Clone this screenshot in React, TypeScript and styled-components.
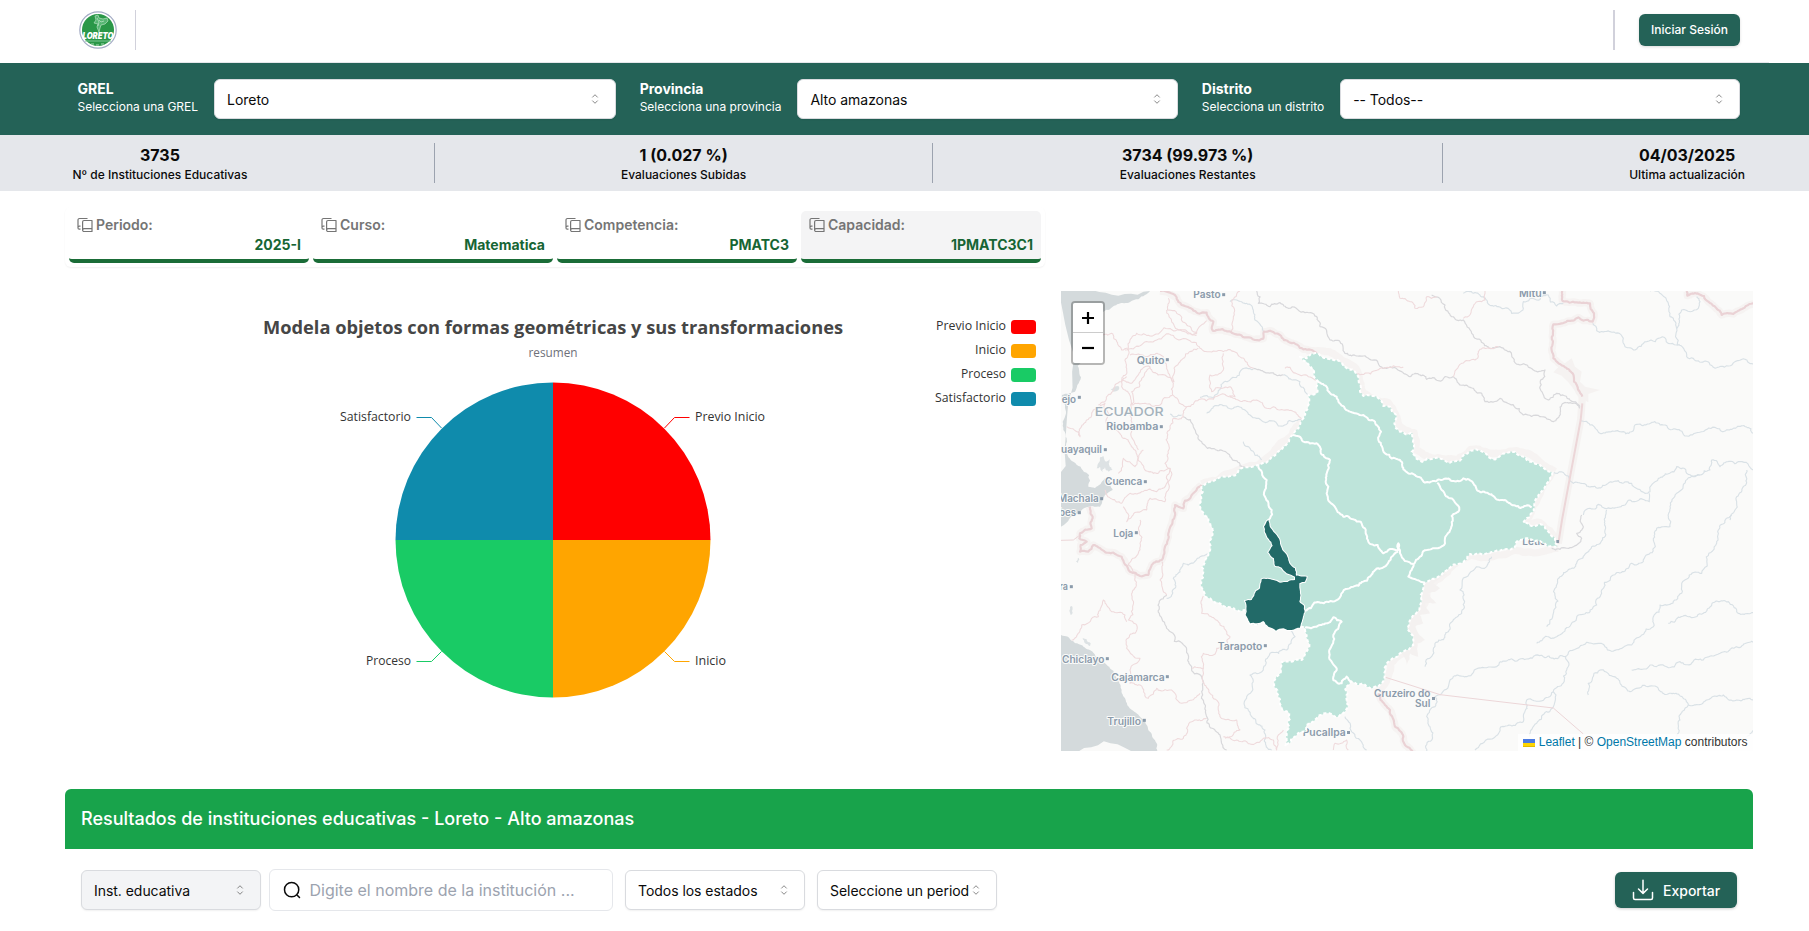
import React from 'react';
import styled, { createGlobalStyle } from 'styled-components';

const Global = createGlobalStyle`
  *, *::before, *::after { box-sizing: border-box; }
  html, body { margin: 0; padding: 0; background: #fff; overflow: hidden; }
  body { font-family: Inter, 'Liberation Sans', sans-serif; color: #0a0a0a; }
  button { font-family: inherit; border: 0; }
`;

const brand = '#246257';

const Page = styled.div`
  width: 1809px;
  height: 931px;
  overflow: hidden;
  background: #fff;
`;

const Header = styled.header`
  height: 63px;
  margin: 0 40px;
  padding: 10px 29px 0 39px;
  display: flex;
  justify-content: space-between;
  align-items: flex-start;
  border-bottom: 1px solid #e5e7eb;
`;

const HeaderSide = styled.div`
  display: flex;
  align-items: center;
  gap: ${(p: { $gap: number }) => p.$gap}px;
  height: 40px;
`;

const HeaderRule = styled.span<{ $w?: number }>`
  width: ${(p) => p.$w ?? 1}px;
  height: 40px;
  background: #d1d1db;
`;

const LoginButton = styled.button`
  width: 101px;
  height: 32px;
  border-radius: 6px;
  background: ${brand};
  color: #fff;
  font-size: 12px;
  font-weight: 500;
  padding: 0 0 1px;
  box-shadow: 0 1px 3px rgba(0, 0, 0, 0.15);
`;

const LocationBar = styled.section`
  height: 72px;
  padding: 16px 69px 0 77.5px;
  background: ${brand};
  display: grid;
  grid-template-columns: repeat(3, 1fr);
  column-gap: 24px;
  align-items: start;
`;

const Field = styled.div`
  display: flex;
  gap: 16px;
`;

const FieldLabel = styled.div`
  color: #fff;
  white-space: nowrap;
  font-size: 12px;
  line-height: 16px;
  font-weight: 400;
  strong {
    display: block;
    font-size: 14px;
    line-height: 20px;
    font-weight: 700;
  }
`;

const SelectBox = styled.div<{ $width?: number; $muted?: boolean }>`
  ${(p) => (p.$width ? `width: ${p.$width}px; flex: none;` : 'flex: 1;')}
  height: 40px;
  padding: 0 12px;
  display: flex;
  align-items: center;
  justify-content: space-between;
  border: 1px solid #d9dbdf;
  border-radius: 6px;
  background: ${(p) => (p.$muted ? '#f3f4f6' : '#fff')};
  box-shadow: 0 1px 2px rgba(0, 0, 0, 0.06);
  font-size: 14px;
  white-space: nowrap;
  span { min-width: 0; letter-spacing: -0.04px; }
  svg { flex: none; opacity: 0.5; }
`;

const StatsBar = styled.section`
  height: 56px;
  padding: 8px 64px 8px 72.5px;
  background: #e5e7eb;
  display: flex;
  justify-content: space-between;
`;

const StatRule = styled.span`
  width: 1px;
  height: 40px;
  background: #9ca3af;
`;

const Stat = styled.div`
  text-align: center;
  font-size: 12px;
  line-height: 16px;
  font-weight: 500;
  strong {
    display: block;
    font-size: 16px;
    line-height: 24px;
    font-weight: 700;
  }
`;

const Content = styled.main`
  margin: 16px 56px 0 65px;
`;

const TabStrip = styled.nav`
  width: 980px;
  height: 60px;
  padding: 4px;
  display: flex;
  gap: 4px;
  border-radius: 6px;
  box-shadow: 0 1px 2px rgba(0, 0, 0, 0.06);
`;

const Tab = styled.div<{ $active?: boolean }>`
  width: 240px;
  height: 52px;
  padding: 4px 8px 0;
  border-bottom: 4px solid #1a6c37;
  border-radius: 5px;
  background: ${(p) => (p.$active ? '#f4f4f5' : '#fff')};
  font-size: 14px;
  line-height: 20px;
`;

const TabLabel = styled.div`
  display: flex;
  align-items: center;
  gap: 3px;
  color: #757575;
  font-weight: 600;
`;

const TabValue = styled.div`
  text-align: right;
  color: #166534;
  font-weight: 700;
`;

const Panels = styled.div`
  margin-top: 24px;
  display: flex;
  justify-content: space-between;
`;

const ChartPanel = styled.div`
  width: 980px;
  height: 460px;
  svg { display: block; }
`;

const MapPanel = styled.div`
  position: relative;
  width: 692px;
  height: 460px;
  overflow: hidden;
  svg { display: block; }
`;

const ZoomControl = styled.div`
  position: absolute;
  top: 10px;
  left: 10px;
  width: 34px;
  border: 2px solid rgba(0, 0, 0, 0.27);
  border-radius: 4px;
  background-clip: padding-box;
`;

const ZoomButton = styled.div`
  height: 30px;
  background: #fff;
  display: flex;
  align-items: center;
  justify-content: center;
  &:first-child { border-bottom: 1px solid #ccc; border-radius: 2px 2px 0 0; }
  &:last-child { border-radius: 0 0 2px 2px; }
`;

const Attribution = styled.div`
  position: absolute;
  right: 0;
  bottom: 0;
  height: 17px;
  padding: 0 5.5px 0 5px;
  display: flex;
  align-items: center;
  gap: 4px;
  background: rgba(255, 255, 255, 0.8);
  font: 12px/17px 'Liberation Sans', Arial, sans-serif;
  color: #333;
  white-space: nowrap;
  a { color: #0078a8; text-decoration: none; }
`;

const ResultsTitle = styled.h2`
  margin: 38px 0 0;
  height: 60px;
  padding: 0 16px;
  border-radius: 6px 6px 0 0;
  background: #18a34b;
  color: #fff;
  font-size: 18px;
  font-weight: 500;
  line-height: 60px;
`;

const FilterRow = styled.div`
  padding: 20px 16px 0;
  display: flex;
  align-items: center;
`;

const SearchBox = styled.div`
  width: 344px;
  height: 42px;
  margin: 0 12px 0 8px;
  padding: 0 13px;
  display: flex;
  align-items: center;
  gap: 8.5px;
  border: 1px solid #e5e7eb;
  border-radius: 6px;
  font-size: 16px;
  color: #9ca3af;
  white-space: nowrap;
`;

const SelectGap = styled.span`
  width: 12px;
`;

const ExportButton = styled.button`
  width: 122px;
  height: 36px;
  margin-left: auto;
  padding: 0 0 0 17px;
  display: flex;
  align-items: center;
  gap: 9px;
  border-radius: 6px;
  background: ${brand};
  color: #fff;
  font-size: 14px;
  font-weight: 500;
  box-shadow: 0 1px 3px rgba(0, 0, 0, 0.2);
`;

const CaretSort = () => (
  <svg width="16" height="16" viewBox="0 0 15 15" fill="none" stroke="#0a0a0a" strokeWidth="0.9" strokeLinecap="round" strokeLinejoin="round">
    <path d="M5.25 5.75 7.5 3.5l2.25 2.25M5.25 9.25 7.5 11.5l2.25-2.25" />
  </svg>
);

const Select = ({ text, width, muted }: { text: string; width?: number; muted?: boolean }) => (
  <SelectBox $width={width} $muted={muted}>
    <span>{text}</span>
    <CaretSort />
  </SelectBox>
);

const BooksIcon = () => (
  <svg width="16" height="16" viewBox="0 0 16 16" fill="none" stroke="#757575" strokeWidth="1.2" strokeLinejoin="round">
    <path d="M10.500 1.500H2.500a1.500 1.500 0 0 0-1.500 1.500v8a1.200 1.200 0 0 0 1.200 1.200h1.300M1 10.500a1.400 1.400 0 0 1 1.300-1.300h1.200" />
    <path d="M7 3.500h8v11H7a1.400 1.400 0 0 1-1.400-1.400V5A1.500 1.500 0 0 1 7 3.500ZM5.800 12.700q.2-1 1.300-1H15" />
  </svg>
);

const Logo = () => (
  <svg width="38" height="38" viewBox="0 0 38 38">
    <circle cx="19" cy="19" r="18.2" fill="#fff" stroke="#a3abc4" strokeWidth="1.2" />
    <circle cx="19" cy="19" r="16" fill="#2a9748" />
    <path d="M16 5l3-1 1 3 4 1 4-1 1 3-3 3-4 1-1 3-1 4-2-5 1-3-4-1 2-3z" fill="#57b673" stroke="#b5dfc0" strokeWidth=".7" />
    <path d="M20 9l2 2 3-1M18 7l2 4-1 4" fill="none" stroke="#d6efdc" strokeWidth=".6" />
    <path d="M6 30h26" stroke="#7cc795" strokeWidth="1" />
    <text x="19" y="28" textAnchor="middle" textLength="31" lengthAdjust="spacingAndGlyphs" fontSize="9" fontWeight="900" fontStyle="italic" fill="#fff" fontFamily="Inter, sans-serif">LORETO</text>
    <path d="M12 33h3m2 1h3m2-1h3" stroke="#a8dab6" strokeWidth="1" />
  </svg>
);

const slices = [
  { name: 'Previo Inicio', color: '#ff0000', d: 'M488 249V91.500A157.500 157.500 0 0 1 645.500 249Z' },
  { name: 'Inicio', color: '#ffa500', d: 'M488 249H645.500A157.500 157.500 0 0 1 488 406.500Z' },
  { name: 'Proceso', color: '#19cb65', d: 'M488 249V406.500A157.500 157.500 0 0 1 330.500 249Z' },
  { name: 'Satisfactorio', color: '#0f8bac', d: 'M488 249H330.500A157.500 157.500 0 0 1 488 91.500Z' },
];

const chartLabels = [
  { line: 'M599.500 137l10-10.500h15', x: 630, y: 130, len: 70, anchor: 'start' as const },
  { line: 'M599.500 360.500l10 10h15', x: 630, y: 374, len: 31, anchor: 'start' as const },
  { line: 'M376.500 360.500l-10 10h-15', x: 346, y: 374, len: 45, anchor: 'end' as const },
  { line: 'M376.500 137l-10-10.500h-15', x: 346, y: 130, len: 71, anchor: 'end' as const },
];

const PieChart = () => (
  <svg width="980" height="460" fontFamily="'Open Sans', 'Noto Sans', sans-serif" fontSize="12" fill="#333">
    <text x="198" y="42.5" textLength="580" fontSize="18" fontWeight="700" fill="#464646" lengthAdjust="spacingAndGlyphs">
      Modela objetos con formas geométricas y sus transformaciones
    </text>
    <text x="463.5" y="66" textLength="49" fill="#6e7079" lengthAdjust="spacingAndGlyphs">resumen</text>
    {slices.map((s) => <path key={s.name} d={s.d} fill={s.color} />)}
    {chartLabels.map((l, i) => (
      <g key={i}>
        <path d={l.line} fill="none" stroke={slices[i].color} strokeWidth="1" />
        <text x={l.x} y={l.y} textAnchor={l.anchor} textLength={l.len} lengthAdjust="spacingAndGlyphs">{slices[i].name}</text>
      </g>
    ))}
    {slices.map((s, i) => (
      <g key={s.name}>
        <rect x="946" y={29 + i * 24} width="25" height="14" rx="3.5" fill={s.color} />
        <text x="941" y={39 + i * 24} textAnchor="end" textLength={chartLabels[i].len} lengthAdjust="spacingAndGlyphs">{s.name}</text>
      </g>
    ))}
  </svg>
);

/* Points are "x,y x,y ..." in map units (three units per pixel). Each segment
   is subdivided with a repeatable offset so coasts and rivers look natural. */
function rough(src: string, amp = 0.18, close = false): string {
  let pts = src.trim().split(/\s+/).map((p) => p.split(',').map(Number));
  if (close) pts.push(pts[0]);
  for (let n = 0; n < 4; n++) {
    const next: number[][] = [pts[0]];
    for (let i = 1; i < pts.length; i++) {
      const [ax, ay] = pts[i - 1];
      const [bx, by] = pts[i];
      const dist = Math.hypot(bx - ax, by - ay);
      if (dist > 7) {
        const h = Math.sin(ax * 12.9898 + ay * 78.233 + bx * 3.7 + by * 9.1) * 43758.5453;
        const k = (h - Math.floor(h) - 0.5) * 2 * amp;
        next.push([(ax + bx) / 2 - (by - ay) * k, (ay + by) / 2 + (bx - ax) * k]);
      }
      next.push(pts[i]);
    }
    pts = next;
  }
  return 'M' + pts.map(([x, y]) => `${x.toFixed(1)} ${y.toFixed(1)}`).join('L') + (close ? 'Z' : '');
}

const water = [
  '0,0 300,33 285,45 265,58 240,66 205,72 180,88 160,95 140,130 130,180 120,215 98,245 83,258 88,280 93,292 82,315 75,335 55,342 36,345 45,375 48,400 38,425 40,450 50,475 48,515 70,545 92,560 115,583 122,600 115,620 135,622 155,606 165,595 180,600 188,630 165,645 150,680 105,683 85,700 45,732 33,740 0,740',
  '0,1060 33,1065 70,1084 130,1118 165,1150 190,1172 205,1200 215,1230 228,1265 258,1298 283,1322 300,1355 320,1390 323,1420 0,1420',
];

const lakes = [
  '150,532 160,528 168,545 180,538 188,570 176,575 165,562 158,576 150,560 140,565 146,548',
  '182,328 205,318 208,325 190,335',
  '85,833 88,838 84,850 78,845',
  '60,980 66,978 68,998 62,1005 58,992',
  '98,1074 110,1078 122,1090 120,1098 105,1090',
];

const countryBorders = [
  '330,33 380,52 395,75 430,92 470,98 490,125 488,152 545,158 590,172 640,176 642,155 660,152 690,165 720,188 760,208 800,222',
  '455,615 430,640 405,662 400,685 375,675 368,720 355,760 345,800 335,840 305,855 295,885 270,888 240,875 215,830 190,818 160,812 130,795 115,815 90,815 92,795 110,785 88,775 90,760 125,745 128,710 118,680',
  '1537,33 1537,62 1580,67 1620,70 1632,100 1628,125 1600,122 1585,112 1570,122 1535,130 1510,133 1510,235 1545,262 1568,280 1572,305 1585,330 1597,350',
  '1910,33 1912,47 1943,40 1975,65 2015,105 2050,102 2080,85 2112,70',
  '985,1240 1005,1275 1020,1290 1035,1340 1060,1370 1065,1395 1090,1420',
];

const borderHalos = [
  '770,212 860,228 918,265 942,340 1015,368 1048,440 1092,458 1097,508 1150,535 1220,540 1262,508 1310,516 1400,512 1515,575',
  '1440,732 1470,728 1500,752 1525,790',
  '1525,805 1395,810 1260,825 1170,895 1130,920 1125,970 1095,1010 1080,1050 1092,1100 1060,1120 1020,1150 1010,1200 990,1230',
  '1508,577 1465,650 1425,725',
  '755,420 728,465 625,555 455,612',
];

const pinkLines = [
  '355,55 352,90 390,105 410,135 440,160 470,122', '350,90 385,150 440,165', '160,165 185,160 200,185 215,210 235,205 240,180 260,160 300,168 390,150 440,160',
  '225,210 320,180 420,182 450,205 480,215 560,218 610,265', '235,205 230,270 215,320 245,370 245,430 250,480 265,510',
  '215,300 245,310 300,260 345,285 370,310 368,345 330,375 265,370 245,375 245,335 275,295 300,262', '240,225 290,230 340,230 350,260 372,305 400,235 445,205',
  '520,220 520,270 480,285 485,335 540,320 555,350 490,358 410,380 370,345', '410,380 400,410 370,415 360,440 355,520 345,550 360,565 310,580 270,545 255,510 215,470 170,440 175,400 165,370 130,390 110,420 90,470 50,440',
  '230,290 195,315 145,375', '360,565 350,610 320,635 240,640 215,670 165,630', '360,565 358,620 345,665 300,655 290,690 230,725 220,680', '280,510 255,560 220,535 205,580',
  '705,265 720,262 760,285 800,300', '540,345 550,355 620,360 650,385 690,390 755,420', '545,158 550,110 545,65 570,33',
  '270,720 270,790 235,855 255,890 245,945 235,1020 260,1035 255,1060 228,1080 230,1105 270,1135 240,1170 240,1210 270,1215 295,1255 320,1225 370,1235 395,1270 450,1240',
  '65,1080 95,1035 125,1015 145,1010 160,960 185,995 225,1005 230,1025', '335,845 330,900 350,945',
  '460,948 455,1000 510,1035 540,1070 530,1095 500,1105 490,1125 460,1120 460,1165 480,1240 510,1310 560,1320 570,1350 540,1370 525,1375',
  '425,1165 460,1165', '350,1410 400,1375 410,1345 440,1320 470,1315', '520,1370 590,1385 640,1375 670,1380 680,1410 685,1365 700,1350', '850,1410 855,1390 890,1380 895,1410',
  '1045,33 1050,55 1095,85 1120,80 1130,50 1160,50', '1240,115 1270,80 1305,60 1305,33', '920,282 1000,265 1060,262', '1210,290 1235,250 1275,240 1285,215 1345,200',
];

const straightPink = ['M1597 370L1592 420L1536 720L1525 790', 'M1000 1190L1080 1215L1170 1244L1510 1284L1600 1362', 'M33 781L70 780L90 765'];

const greyRivers = [
  '620,33 625,70 660,80 690,68 715,85 760,95 800,110 810,140 830,155 840,180 870,185 885,220 940,228 1010,265 1055,275 1080,290 1130,298 1165,302 1210,290',
  '1145,45 1185,75 1205,110 1240,120 1265,160 1300,190 1350,200 1385,225 1410,255 1450,270 1485,270 1478,340 1495,360 1520,340 1570,365 1590,380',
  '1210,290 1240,315 1270,325 1305,365 1350,355 1420,405 1470,410 1510,425 1535,375 1590,385',
  '610,265 640,275 700,285', '400,410 430,440 455,485 500,510 545,535 570,558 625,560',
  '350,945 328,1000 350,1045 410,1110 425,1160 455,1235 470,1310 510,1365 530,1410', '1595,705 1600,740 1580,760 1595,775 1570,800 1530,808 1505,805',
];

const blueRivers = [
  '540,65 560,60 590,70 610,90 615,120 640,160', '450,352 490,355 540,300 570,275 610,268', '470,400 490,380 530,378 600,405 640,425 685,438 755,420', '700,285 750,305 785,345', '580,485 600,505 635,540',
  '475,820 450,830 400,850 370,895 365,945 350,955', '720,1050 735,1070 710,1110 660,1120 640,1170 600,1185 590,1250 605,1310 645,1350 665,1410', '360,402 395,405', '885,1310 900,1345 930,1380 950,1410',
  '1240,40 1300,50 1345,80 1385,100 1420,85 1420,65 1460,60 1495,45 1520,78 1540,70', '1628,130 1640,152 1680,155 1720,175 1725,200 1755,210 1790,185 1880,195 1910,230 1930,235 1990,262 2035,258 2055,245 2110,253',
  '1800,33 1855,70 1860,110 1880,145 1882,195', '1882,145 1895,90 1945,85 1950,65 1940,50', '1592,423 1620,435 1650,460 1710,455 1770,432 1840,435 1910,468 2000,445 2060,442 2110,460', '1510,578 1555,588 1570,610 1625,620 1690,605 1745,610 1785,640 1800,635 1825,595 1880,560 1910,580 1950,585 1980,570 1985,540 2010,560 2070,545 2110,570',
  '1798,640 1798,665 1740,660 1680,685 1610,688 1600,705', '2090,570 2080,620 2060,650 2055,690 2040,720', '1950,585 1880,640 1860,680 1860,740 1820,745 1810,780 1780,845 1745,850 1690,885 1655,940 1640,975 1585,1005 1520,1070 1460,1090',
  '1670,690 1665,750 1625,800 1580,850 1530,890 1515,925 1510,1000 1490,1040', '1325,830 1310,860 1230,930 1235,1000 1195,1055 1155,1090 1125,1160',
  '2045,705 2005,750 2000,790 1955,880 1895,915 1895,940 1830,975 1810,1010 1810,1040 1775,1065 1745,1095 1665,1100 1560,1112 1545,1130 1480,1130 1390,1140 1340,1160 1250,1190 1200,1200 1175,1240 1155,1250 1155,1280 1130,1310 1140,1340 1130,1415',
  '1547,1130 1550,1170 1510,1235 1430,1260 1420,1325 1350,1345 1275,1410', '1510,1235 1510,1280 1460,1330 1440,1370', '1615,1245 1632,1180 1700,1195 1740,1235 1820,1220 1870,1240 1915,1275 1970,1260 2020,1245 2060,1260 2112,1260', '1915,1275 1890,1320 1880,1370',
  '1745,1170 1800,1155 1850,1160 1890,1145 1960,1140 2010,1120 2060,1100 2112,1085', '1855,1030 1920,1010 1960,1000 2000,963 2035,965 2060,995 2112,1000', '2090,1370 2112,1340',
];

const loreto = '750,230 770,235 800,219 830,235 862,240 880,258 915,275 925,290 930,335 940,348 970,348 1000,378 1020,380 1038,405 1035,440 1050,455 1088,460 1092,495 1085,515 1115,545 1150,535 1200,548 1230,542 1262,512 1275,508 1305,520 1330,538 1350,528 1395,515 1425,530 1440,545 1470,555 1508,577 1495,605 1465,650 1420,728 1445,738 1470,732 1495,755 1515,775 1522,800 1490,798 1470,783 1440,778 1410,780 1398,788 1393,805 1350,812 1310,820 1260,822 1230,850 1195,865 1165,890 1125,908 1120,925 1115,965 1090,1005 1072,1045 1090,1095 1075,1110 1050,1120 1015,1145 1003,1165 1003,1200 985,1220 960,1225 940,1212 905,1205 885,1225 890,1260 895,1275 880,1300 865,1310 830,1300 800,1315 770,1335 765,1355 740,1365 725,1375 705,1398 710,1360 718,1300 695,1285 685,1250 672,1215 692,1180 695,1145 725,1145 755,1140 762,1130 765,1045 755,1040 740,1045 700,1045 678,1053 655,1040 640,1025 600,1032 588,1000 583,990 540,982 495,968 465,948 460,890 455,860 480,815 485,770 475,715 455,690 455,618 480,605 625,555 700,500 728,465 755,420 775,345 800,340 800,300 770,245';

const provinceLines = [
  '800,300 830,320 860,350 900,395 940,405 975,425 993,455 985,480 1005,520 1050,540 1060,568 1095,585 1125,608 1180,598 1240,595 1270,610 1280,628 1330,648 1380,670 1445,682',
  '1162,608 1175,630 1200,655 1228,688 1205,708 1203,745 1190,765 1185,790 1155,805 1110,830 1090,852 1050,820 1045,790 1045,810 1000,820 955,785 945,745 910,718 880,710 830,640 828,600 840,540 800,490 760,485 728,465',
  '1090,852 1085,870 1075,890 1125,908',
  '625,555 650,600 645,650 665,690 660,715 645,735',
  '1045,815 1010,855 960,890 910,920 830,965 765,992',
  '765,1043 800,1040 830,1030 850,1012 875,1025 850,1065 838,1110 845,1145 860,1165 850,1200 875,1210 890,1190 905,1205',
];

const altoAmazonas = '655,720 670,755 690,785 697,810 712,830 718,850 735,865 738,887 770,890 765,905 748,910 750,935 748,965 762,977 758,1015 750,1043 725,1050 700,1045 678,1052 655,1040 640,1023 620,1030 600,1030 587,1005 585,963 605,960 618,933 630,925 635,898 670,900 690,908 735,900 735,890 710,880 695,863 675,857 672,835 655,817 668,797 645,757 642,740';

type City = { t: string; x: number; y: number; w: number; dx: number; dy: number };
const cities: City[] = [
  { t: 'Pasto', x: 430, y: 54, w: 82, dx: 521, dy: 44 },
  { t: 'Quito', x: 260, y: 252, w: 84, dx: 352, dy: 239 },
  { t: 'Riobamba', x: 169, y: 449, w: 156, dx: 334, dy: 440 },
  { t: 'uayaquil', x: 33, y: 519, w: 123, dx: 166, dy: 509 },
  { t: 'ejo', x: 35, y: 368, w: 43, dx: 88, dy: 352 },
  { t: 'Cuenca', x: 165, y: 616, w: 112, dx: 286, dy: 605 },
  { t: 'Machala', x: 24, y: 665, w: 122, dx: 155, dy: 656 },
  { t: 'bes', x: 27, y: 709, w: 51, dx: 88, dy: 698 },
  { t: 'Loja', x: 190, y: 770, w: 60, dx: 259, dy: 758 },
  { t: 'ra', x: 28, y: 930, w: 26, dx: 64, dy: 920 },
  { t: 'Chiclayo', x: 36, y: 1148, w: 127, dx: 172, dy: 1136 },
  { t: 'Cajamarca', x: 184, y: 1204, w: 160, dx: 352, dy: 1190 },
  { t: 'Trujillo', x: 172, y: 1335, w: 101, dx: 283, dy: 1321 },
  { t: 'Tarapoto', x: 503, y: 1109, w: 134, dx: 646, dy: 1097 },
  { t: 'Mitú', x: 1407, y: 51, w: 68, dx: 1483, dy: 38 },
];

const CityLabel = ({ c }: { c: City }) => (
  <g fill="#8b9bab">
    <text x={c.x} y={c.y} textLength={c.w} lengthAdjust="spacingAndGlyphs" stroke="#fafaf9" strokeWidth="6" paintOrder="stroke" strokeLinejoin="round">{c.t}</text>
    <rect x={c.dx - 4.5} y={c.dy - 4.5} width="9" height="9" />
  </g>
);

const MapDrawing = () => (
  <svg width="692" height="460" viewBox="33 33 2076 1380" fill="none" fontFamily="Inter, sans-serif" fontSize="30" fontWeight="600" strokeLinejoin="round">
    <rect x="33" y="33" width="2076" height="1380" fill="#fafaf9" />
    {water.map((p) => <path key={p} d={rough(p, 0.12, true)} fill="#d4dadc" />)}
    <path d={rough('115,590 135,576 160,580 162,592 150,600 138,622 122,620', 0.2, true)} fill="#fafaf9" />
    {lakes.map((p) => <path key={p} d={rough(p, 0.2, true)} fill="#dde2e4" />)}
    {[...countryBorders, ...borderHalos].map((p) => <path key={p} d={rough(p, 0.1)} stroke="#f6f3f2" strokeWidth="22" />)}
    <path d="M1597 350L1592 420L1536 720L1525 790" stroke="#f5f2f1" strokeWidth="22" />
    <path d="M1545 250l20-15 10 25 20 15-5 30 15 15 45 10-35 12 0 25-25-15-35-45-20-20-25-10 15-15z" fill="#f5f2f1" />
    <path d={rough('1160,890 1195,880 1150,910 1170,925 1135,940 1160,970 1125,970 1140,1000 1110,1005 1120,1030 1095,1040 1125,1080 1100,1090 1105,1130 1080,1120 1070,1155 1055,1120 1085,1090 1070,1045 1115,965 1120,910', 0.1, true)} fill="#f4f1f0" />
    {blueRivers.map((p) => <path key={p} d={rough(p, 0.22)} stroke="#d9e1e6" strokeWidth="3.4" />)}
    {greyRivers.map((p) => <path key={p} d={rough(p, 0.22)} stroke="#d8d8db" strokeWidth="3.6" />)}
    {pinkLines.map((p) => <path key={p} d={rough(p, 0.2)} stroke="#efdadc" strokeWidth="3.2" />)}
    {straightPink.map((p, i) => <path key={p} d={p} stroke="#ecd6d8" strokeWidth={i ? 3 : 6} />)}
    {countryBorders.map((p) => <path key={p} d={rough(p, 0.15)} stroke="#ead2d5" strokeWidth="6.5" />)}
    {cities.map((c) => <CityLabel key={c.t} c={c} />)}
    <text x="134" y="407" fontSize="37" fontWeight="500" textLength="207" lengthAdjust="spacingAndGlyphs" fill="#a4b2bc" stroke="#fafaf9" strokeWidth="5" paintOrder="stroke">ECUADOR</text>
    <g fill="#8b9bab">
      <text x="972" y="1251" textLength="169" lengthAdjust="spacingAndGlyphs">Cruzeiro do</text>
      <text x="1095" y="1281" textLength="46" lengthAdjust="spacingAndGlyphs">Sul</text>
      <rect x="1146" y="1251" width="9" height="9" />
      <text x="758" y="1369" textLength="129" lengthAdjust="spacingAndGlyphs">Pucallpa</text>
      <rect x="891" y="1353" width="9" height="9" />
      <text x="1417" y="796" textLength="96" lengthAdjust="spacingAndGlyphs">Leticia</text>
      <rect x="1519" y="780" width="8" height="9" />
    </g>
    <path d={rough(loreto, 0.16, true)} fill="#bee4da" />
    <path d={rough(loreto, 0.16, true)} stroke="#fff" strokeWidth="6" strokeDasharray="9 7" />
    {provinceLines.map((p) => <path key={p} d={rough(p, 0.18)} stroke="#fff" strokeWidth="6" />)}
    <path d={rough(altoAmazonas, 0.1, true)} fill="#226a68" stroke="#fff" strokeWidth="6" paintOrder="stroke" />
  </svg>
);

const stats = [
  ['3735', 'Nº de Instituciones Educativas'],
  ['1 (0.027 %)', 'Evaluaciones Subidas'],
  ['3734 (99.973 %)', 'Evaluaciones Restantes'],
  ['04/03/2025', 'Ultima actualización'],
];

const tabs = [
  ['Periodo:', '2025-I'],
  ['Curso:', 'Matematica'],
  ['Competencia:', 'PMATC3'],
  ['Capacidad:', '1PMATC3C1'],
];

const locations = [
  ['GREL', 'Selecciona una GREL', 'Loreto'],
  ['Provincia', 'Selecciona una provincia', 'Alto amazonas'],
  ['Distrito', 'Selecciona un distrito', '-- Todos--'],
];

export default function App() {
  return (
    <Page>
      <Global />
      <Header>
        <HeaderSide $gap={18}>
          <Logo />
          <HeaderRule />
        </HeaderSide>
        <HeaderSide $gap={24}>
          <HeaderRule $w={2} />
          <LoginButton>Iniciar Sesión</LoginButton>
        </HeaderSide>
      </Header>
      <LocationBar>
        {locations.map(([title, hint, value]) => (
          <Field key={title}>
            <FieldLabel><strong>{title}</strong>{hint}</FieldLabel>
            <Select text={value} />
          </Field>
        ))}
      </LocationBar>
      <StatsBar>
        {stats.map(([value, label], i) => (
          <React.Fragment key={label}>
            {i > 0 && <StatRule />}
            <Stat><strong>{value}</strong>{label}</Stat>
          </React.Fragment>
        ))}
      </StatsBar>
      <Content>
        <TabStrip>
          {tabs.map(([label, value], i) => (
            <Tab key={label} $active={i === 3}>
              <TabLabel><BooksIcon />{label}</TabLabel>
              <TabValue>{value}</TabValue>
            </Tab>
          ))}
        </TabStrip>
        <Panels>
          <ChartPanel><PieChart /></ChartPanel>
          <MapPanel>
            <MapDrawing />
            <ZoomControl>
              <ZoomButton>
                <svg width="14" height="14" viewBox="0 0 14 14"><path d="M7 1v12M1 7h12" stroke="#000" strokeWidth="2.2" /></svg>
              </ZoomButton>
              <ZoomButton>
                <svg width="14" height="14" viewBox="0 0 14 14"><path d="M1 7h12" stroke="#000" strokeWidth="2.2" /></svg>
              </ZoomButton>
            </ZoomControl>
            <Attribution>
              <svg width="12" height="8" viewBox="0 0 12 8"><path fill="#4c7be1" d="M0 0h12v4H0z" /><path fill="#ffd500" d="M0 4h12v3H0z" /><path fill="#e0bc00" d="M0 7h12v1H0z" /></svg>
              <span><a>Leaflet</a> | © <a>OpenStreetMap</a> contributors</span>
            </Attribution>
          </MapPanel>
        </Panels>
        <ResultsTitle>Resultados de instituciones educativas - Loreto - Alto amazonas</ResultsTitle>
        <FilterRow>
          <Select text="Inst. educativa" width={180} muted />
          <SearchBox>
            <svg width="18" height="18" viewBox="0 0 24 24" fill="none" stroke="#0a0a0a" strokeWidth="2" strokeLinecap="round">
              <circle cx="11.5" cy="11.5" r="9.5" />
              <path d="M22 22l-3-3" />
            </svg>
            Digite el nombre de la institución ...
          </SearchBox>
          <Select text="Todos los estados" width={180} />
          <SelectGap />
          <Select text="Seleccione un period" width={180} />
          <ExportButton>
            <svg width="22" height="22" viewBox="0 0 22 22" fill="none" stroke="#fff" strokeWidth="1.5" strokeLinecap="round" strokeLinejoin="round">
              <path d="M11 1.2v13M6.5 10l4.5 4.4L15.500 10M1.500 13.500v5.500a1.500 1.500 0 0 0 1.500 1.500h16a1.500 1.500 0 0 0 1.500-1.500v-5.500" />
            </svg>
            Exportar
          </ExportButton>
        </FilterRow>
      </Content>
    </Page>
  );
}
